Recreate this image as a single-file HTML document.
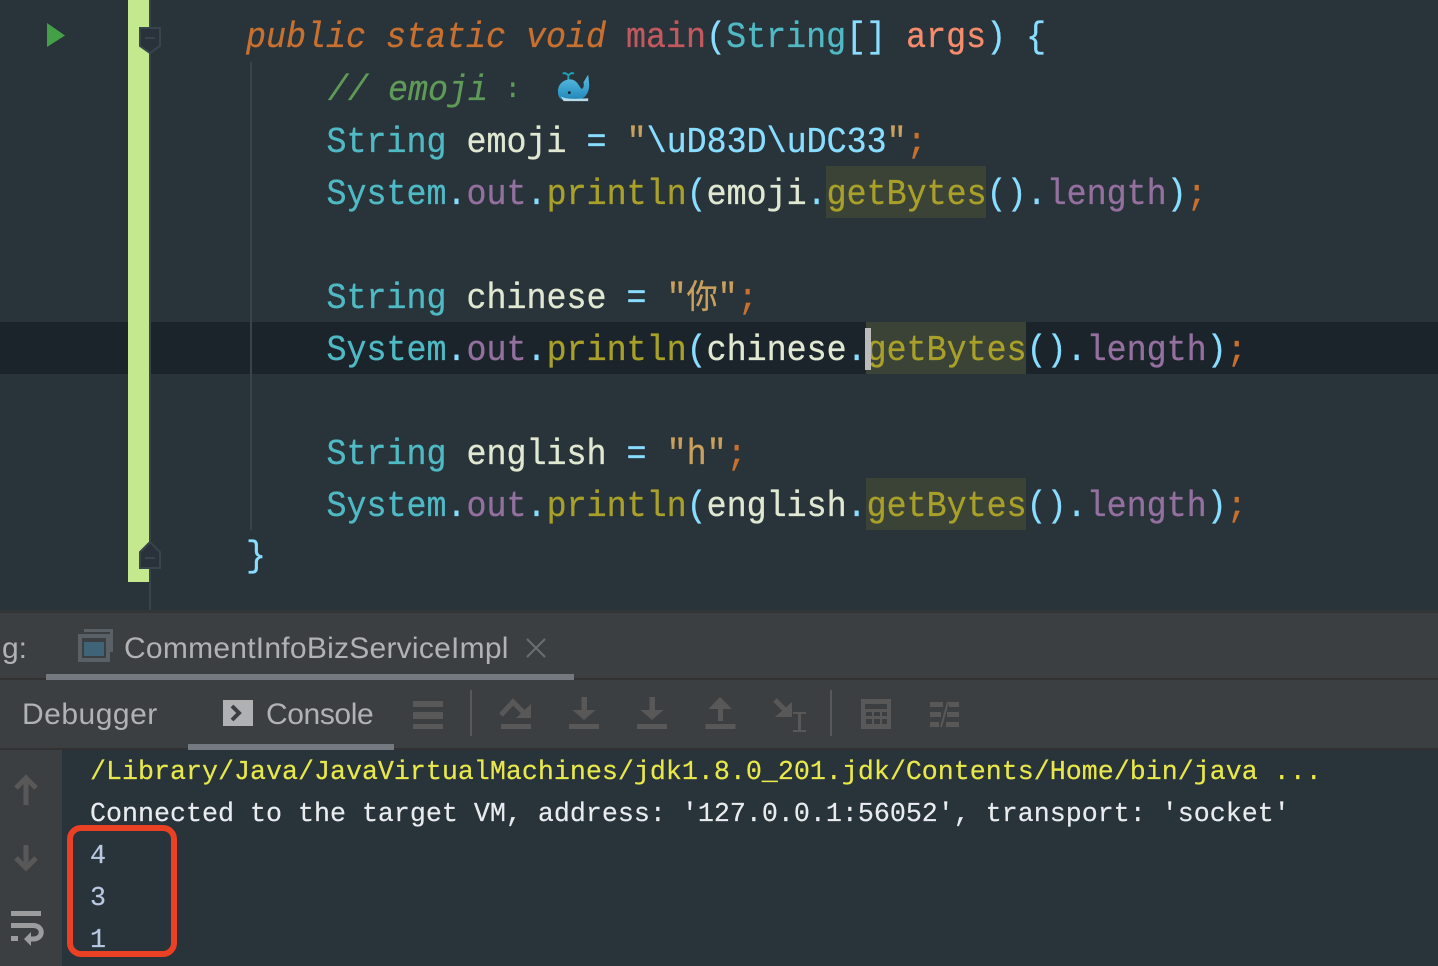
<!DOCTYPE html>
<html><head><meta charset="utf-8"><style>
*{margin:0;padding:0;box-sizing:border-box}
html,body{width:1438px;height:966px;overflow:hidden;background:#28333a}
.a{position:absolute}
.l{position:absolute;white-space:pre;font:33.33px/52px "Liberation Mono","Noto Sans CJK SC",monospace;height:52px;color:#e0e8d2;transform:scaleY(1.07);transform-origin:0 36px;-webkit-text-stroke:.3px}
.c{position:absolute;left:90px;white-space:pre;font:26.66px/42px "Liberation Mono",monospace;height:42px;-webkit-text-stroke:.2px}
.u{position:absolute;white-space:pre;font:30px/40px "Liberation Sans",sans-serif;color:#b0b2b3}
.t{color:#4fb9c4}.p{color:#89ddff}.f{color:#a8a028}.v{color:#94709f}.s{color:#c9a05c}.o{color:#c87030}.k{color:#c87030;font-style:italic}
.g{color:#5f9a58;font-style:italic}
</style></head><body>
<div class="a" style="left:0;top:322px;width:1438px;height:52px;background:#1c242b"></div>
<div class="a" style="left:826px;top:166px;width:160px;height:52px;background:#3a4336"></div>
<div class="a" style="left:866px;top:322px;width:160px;height:52px;background:#3a4336"></div>
<div class="a" style="left:866px;top:478px;width:160px;height:52px;background:#3a4336"></div>
<div class="a" style="left:128px;top:0;width:21px;height:582px;background:#c3e88d"></div>
<div class="a" style="left:149px;top:0;width:2px;height:610px;background:#37444e"></div>
<div class="a" style="left:250px;top:62px;width:2px;height:468px;background:#37444e"></div>
<svg class="a" style="left:0;top:0" width="200" height="600">
<path d="M47 23L65 35.500L47 47Z" fill="#43a047"/>
<path d="M140 28H160V46L150 53L140 46Z" fill="#29323a" stroke="#37444e" stroke-width="2"/>
<path d="M145 38H155" stroke="#37444e" stroke-width="2"/>
<path d="M150 542L160 552V568H140V552Z" fill="#29323a" stroke="#37444e" stroke-width="2"/>
<path d="M145 558H155" stroke="#37444e" stroke-width="2"/>
</svg>
<div class="l" style="left:246px;top:13px"><span class="k">public static void</span> <span style="color:#c2595f">main</span><span class="p">(</span><span class="t">String</span><span class="p">[]</span> <span style="color:#f78c6c">args</span><span class="p">)</span> <span class="p">{</span></div>
<div class="l g" style="left:328px;top:66px">// emoji</div>
<div class="l g" style="left:505px;top:64px;font-style:normal;font-size:26px">:</div>
<svg class="a" style="left:557px;top:69px" width="34" height="34" viewBox="0 0 36 34">
<defs><linearGradient id="wg" x1="0" y1="0" x2="0" y2="1"><stop offset="0" stop-color="#5cc0e4"/><stop offset="1" stop-color="#1f86b8"/></linearGradient></defs>
<path d="M12 7V11M6 4Q9 2 12 6Q15 2 18 4" stroke="#1fa0b8" stroke-width="2" fill="none"/>
<path d="M1 23C1 14 8 10 14 10C21 10 23 17 26 20C28 20 29 16 28 13L33 5L34 14C35 23 30 31 22 32H8C3 32 1 28 1 23Z" fill="url(#wg)"/>
<path d="M4 28C9 31 18 31 33 30L33 33H7Z" fill="#b5dbe6"/>
<circle cx="13" cy="24" r="1.500" fill="#123"/>
</svg>
<div class="l" style="left:326.500px;top:118px"><span class="t">String</span> emoji <span class="p">=</span> <span class="s">"</span><span class="p">\uD83D\uDC33</span><span class="s">"</span><span class="o">;</span></div>
<div class="l" style="left:326.500px;top:170px"><span class="t">System</span><span class="p">.</span><span class="v">out</span><span class="p">.</span><span class="f">println</span><span class="p">(</span>emoji<span class="p">.</span><span class="f">getBytes</span><span class="p">()</span><span class="p">.</span><span class="v">length</span><span class="p">)</span><span class="o">;</span></div>
<div class="l" style="left:326.500px;top:274px"><span class="t">String</span> chinese <span class="p">=</span> <span class="s">"<span style="font-size:31px">你</span>"</span><span class="o">;</span></div>
<div class="l" style="left:326.500px;top:326px"><span class="t">System</span><span class="p">.</span><span class="v">out</span><span class="p">.</span><span class="f">println</span><span class="p">(</span>chinese<span class="p">.</span><span class="f">getBytes</span><span class="p">()</span><span class="p">.</span><span class="v">length</span><span class="p">)</span><span class="o">;</span></div>
<div class="a" style="left:865px;top:328px;width:6px;height:42px;background:#bbb"></div>
<div class="l" style="left:326.500px;top:430px"><span class="t">String</span> english <span class="p">=</span> <span class="s">"h"</span><span class="o">;</span></div>
<div class="l" style="left:326.500px;top:482px"><span class="t">System</span><span class="p">.</span><span class="v">out</span><span class="p">.</span><span class="f">println</span><span class="p">(</span>english<span class="p">.</span><span class="f">getBytes</span><span class="p">()</span><span class="p">.</span><span class="v">length</span><span class="p">)</span><span class="o">;</span></div>
<div class="l p" style="left:246px;top:532px">}</div>

<div class="a" style="left:0;top:610px;width:1438px;height:140px;background:#3c3f41"></div>
<div class="a" style="left:0;top:610px;width:1438px;height:3px;background:#333537"></div>
<div class="a" style="left:0;top:678px;width:1438px;height:2px;background:#323232"></div>
<div class="a" style="left:0;top:748px;width:1438px;height:2px;background:#323232"></div>
<div class="a" style="left:46px;top:674px;width:528px;height:6px;background:#747a80"></div>
<div class="u" style="left:2px;top:629px">g:</div>
<svg class="a" style="left:78px;top:628px" width="36" height="34"><path d="M6 1H35V24H32V4H6Z" fill="#5a6166"/><rect x="2" y="8" width="28" height="24" fill="none" stroke="#5a6166" stroke-width="4"/><rect x="6" y="14" width="20" height="14" fill="#3f6478"/></svg>
<div class="u" style="left:124px;top:629px;letter-spacing:.25px">CommentInfoBizServiceImpl</div>
<svg class="a" style="left:525px;top:637px" width="22" height="22"><path d="M2 2L20 20M20 2L2 20" stroke="#6a6d70" stroke-width="2"/></svg>
<div class="u" style="left:22px;top:695px;letter-spacing:.5px">Debugger</div>
<svg class="a" style="left:223px;top:700px" width="30" height="27"><rect width="30" height="26" fill="#afb1b3"/><path d="M9 6L16 13L9 20" fill="none" stroke="#3c3f41" stroke-width="4"/></svg>
<div class="u" style="left:266px;top:695px;letter-spacing:-.4px">Console</div>
<div class="a" style="left:188px;top:744px;width:206px;height:6px;background:#747a80"></div>
<svg class="a" style="left:400px;top:680px" width="580" height="70" fill="#585858">
<path d="M13 21H43V27H13ZM13 32H43V39H13ZM13 44H43V49H13Z"/>
<rect x="70" y="10" width="2" height="46"/>
<rect x="101" y="44" width="30" height="5"/>
<path d="M101 35L113 22L125 34" fill="none" stroke="#585858" stroke-width="5"/>
<path d="M131 24V38H116Z"/>
<path d="M181.500 17H187V30H195.500L184 40L172.500 30H181.500ZM169 44H199V49H169Z"/>
<path d="M249.500 17H255V30H263.500L252 40L240.500 30H249.500ZM237 44H267V49H237Z"/>
<path d="M320 17L332 29H323V41H318V29H308.500ZM305.500 44H335.500V49H305.500Z"/>
<path d="M392 22V37H375Z"/>
<path d="M375 20L388 33" stroke="#585858" stroke-width="5"/>
<path d="M393 32H406V34H401V50H406V52H393V50H398V34H393Z"/>
<rect x="430" y="10" width="2" height="46"/>
<path d="M461 19H491V49H461ZM465 24V29H487V24ZM466 32V36H472V32ZM474 32V36H480V32ZM482 32V36H487V32ZM466 39V44H472V39ZM474 39V44H480V39ZM482 39V44H487V39Z" fill-rule="evenodd"/>
<path d="M530 22H543V27H530ZM549 22H559V27H549ZM530 32H541V37H530ZM547 32H559V37H547ZM530 42H539V47H530ZM546 42H559V47H546Z"/>
<path d="M548 22L541 47" stroke="#585858" stroke-width="2"/>
</svg>

<div class="a" style="left:0;top:750px;width:62px;height:216px;background:#3c3f41"></div>
<svg class="a" style="left:0;top:750px" width="62" height="216">
<path d="M16 38L26 28L36 38M26 28V55" fill="none" stroke="#585858" stroke-width="5"/>
<path d="M16 108L26 118L36 108M26 95V118" fill="none" stroke="#585858" stroke-width="5"/>
<path d="M11 161H41V166H11ZM11 173H33V178H11ZM11 186H18V191H11Z" fill="#9a9c9e"/>
<path d="M31 175.500H33C44 175.500 44 189 33 189H29" fill="none" stroke="#9a9c9e" stroke-width="5"/>
<path d="M24 189L31 182V196Z" fill="#9a9c9e"/>
</svg>
<div class="c" style="top:752px;color:#e8e84a">/Library/Java/JavaVirtualMachines/jdk1.8.0_201.jdk/Contents/Home/bin/java ...</div>
<div class="c" style="top:794px;color:#e8ecef">Connected to the target VM, address: '127.0.0.1:56052', transport: 'socket'</div>
<div class="c" style="top:836px;color:#b8c8e0">4</div>
<div class="c" style="top:878px;color:#b8c8e0">3</div>
<div class="c" style="top:920px;color:#b8c8e0">1</div>
<div class="a" style="left:67px;top:825px;width:110px;height:132px;border:6px solid #ea4023;border-radius:14px"></div>
</body></html>
